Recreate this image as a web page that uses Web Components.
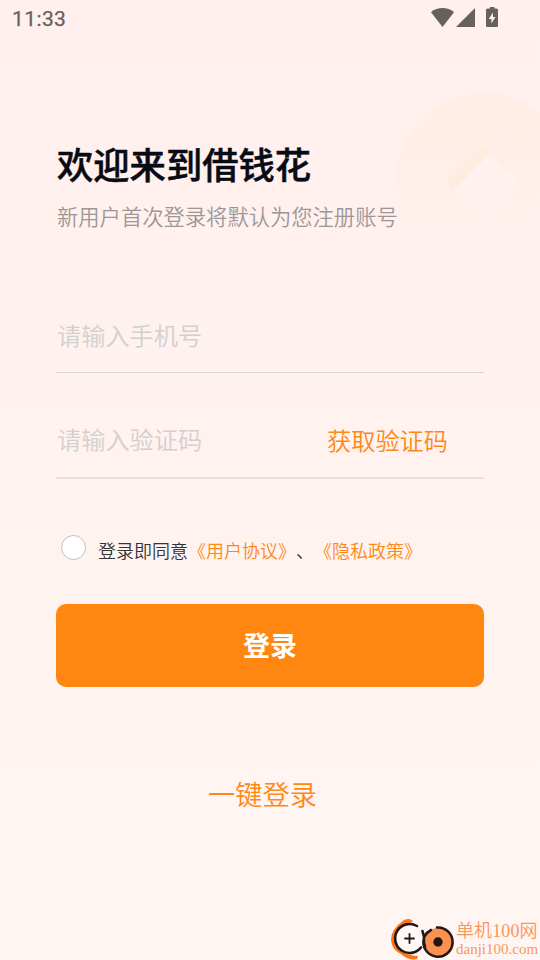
<!DOCTYPE html>
<html lang="zh-CN">
<head>
<meta charset="utf-8">
<title>登录</title>
<style>
html,body{margin:0;padding:0}
body{width:540px;height:960px;overflow:hidden;font-family:"Noto Sans CJK SC",sans-serif;font-weight:350;text-spacing-trim:space-all}
</style>
</head>
<body>
<login-page></login-page>
<script>
function define(name, markup){
  const t=document.createElement('template');
  t.innerHTML=markup;
  customElements.define(name,class extends HTMLElement{
    constructor(){
      super();
      this.attachShadow({mode:'open'}).append(t.content.cloneNode(true));
    }
  });
}

define('status-bar',`
<style>
:host{display:flex;height:38px;box-sizing:border-box;padding:0 40px 2px 12px;align-items:center;color:#66605e;font:400 21px/38px Roboto,sans-serif}
span{flex:1;letter-spacing:.4px;padding-top:2px;-webkit-text-stroke:.25px #66605e}
svg{display:block}
</style>
<span><slot></slot></span>
<svg width="70" height="22" viewBox="430 7 70 22" fill="#66605e">
<path d="M431 12.200C437.500 6.600 447.500 6.600 454 12.200L442.500 27Z"/>
<path d="M456 27L475 8V27Z"/>
<path fill-rule="evenodd" d="M490 7H494.500V8.500H496.500Q498 8.500 498 10V25.500Q498 27 496.500 27H487.500Q486 27 486 25.500V10Q486 8.500 487.500 8.500H490ZM493 12.500L488.700 19H491.400V23.500L495.500 17H493Z"/>
</svg>`);

define('coin-decor',`
<style>:host{display:block;position:absolute;left:390px;top:90px}svg{display:block}</style>
<svg width="150" height="190" viewBox="390 90 150 190">
<defs><linearGradient id="g" x1="0" y1="0" x2="0" y2="1"><stop offset="0" stop-color="#ffede5"/><stop offset=".5" stop-color="#ffefe9"/><stop offset=".52" stop-color="#fff0ec"/><stop offset="1" stop-color="#fff1ee" stop-opacity="0"/></linearGradient></defs>
<circle cx="485" cy="184" r="90.500" fill="url(#g)"/>
<path d="M490 153L517 179Q521 184 517 189L489 216Q484 220 479 216L453 190Z" fill="#fff1ee"/>
<path d="M479 149.500Q485 145.500 491 152L453 191L449 187Q447 182 450 178Z" fill="#ffece1"/>
</svg>`);

define('page-heading',`
<style>
:host{display:block}
h1{margin:0;font-size:36.300px;line-height:50px;font-weight:500;color:#070b14;-webkit-text-stroke:.5px #070b14}
p{margin:13px 0 0;font-size:21.300px;line-height:30px;color:#9b9796}
</style>
<h1><slot></slot></h1><p><slot name="sub"></slot></p>`);

define('form-field',`
<style>
:host{display:flex;box-sizing:border-box;align-items:center;justify-content:space-between;border-bottom:1px solid #d9d5d4;padding:0 36px 0 1px;font-size:24.200px;line-height:34px;color:#d2d0ce}
::slotted([slot=action]){padding-top:2px}
</style>
<slot></slot><slot name="action"></slot>`);

define('agree-row',`
<style>
:host{display:flex;align-items:flex-start;font-size:18px;line-height:26px;color:#333;white-space:nowrap}
svg{display:block;margin:0 12px 0 5px}
p{margin:2px 0 0}
</style>
<svg width="25" height="25"><circle cx="12.500" cy="12.500" r="12" fill="#fff" stroke="#999" stroke-width=".6"/></svg><p><slot></slot></p>`);

define('text-link',`<style>:host{color:#ff8717}</style><slot></slot>`);

define('main-button',`
<style>
:host{display:flex;height:83px;box-sizing:border-box;padding-bottom:2px;border-radius:10px;background:#ff8610;color:#fff;align-items:center;justify-content:center;font-size:27px;font-weight:700;line-height:40px}
</style><slot></slot>`);

define('site-mark',`
<style>
:host{display:flex;position:absolute;left:390px;top:916px;width:150px;height:44px;color:#fa9658}
svg{display:block;flex:none}
div{display:flex;flex-direction:column;font-family:"Liberation Serif","Noto Sans CJK SC",serif;white-space:nowrap;padding-top:4px;margin-left:1px}
b{font-weight:350;font-size:18px;line-height:23px;letter-spacing:.1px}
small{font-weight:400;font-size:15px;line-height:13px}
</style>
<svg width="65" height="44" viewBox="390 916 65 44" fill="none">
<path d="M413 922Q411 917 404 920Q391 929 391 940Q392 950 401 954Q408 961 417 959L418 956Q411 956 406 953Q394 949 395 939Q395 929 405 924Z" fill="#ff7417"/>
<path d="M417 926A14.500 14.500 0 1 0 421 947.500" fill="#fff8f5" stroke="#211818" stroke-width="2.600" stroke-linecap="round"/>
<path d="M405 938.500H414M409.500 934V943" stroke="#211818" stroke-width="1.800" stroke-linecap="round"/>
<circle cx="438" cy="942" r="14" fill="#fc914f"/>
<path d="M422.500 931L424 937Q427 932 431 930M437 927.500A14.600 14.600 0 1 1 424 938Q423.300 942 425 947" stroke="#211818" stroke-width="2.600" stroke-linecap="round" stroke-linejoin="round"/>
<circle cx="438" cy="942" r="4.700" fill="#211818"/>
</svg>
<div><b><slot></slot></b><small><slot name="host"></slot></small></div>`);

define('login-page',`
<style>
:host{display:flex;flex-direction:column;position:relative;width:540px;height:960px;overflow:hidden;background:linear-gradient(#fff0ed,#fff1ee 30%,#fff4f1 70%,#fff6f4)}
main{display:flex;flex-direction:column;position:relative;padding:100px 56px 0}
.phone{height:60px;margin-top:82px;padding-bottom:16px}
.code{height:61px;margin-top:45px;padding-bottom:18px;border-bottom:2px solid #e5dfdd}
agree-row{margin-top:56px}
main-button{margin-top:41px}
.quick{align-self:center;margin:86px 15px 0 0;font-size:27.200px;line-height:40px}
page-heading{padding-left:1px}
</style>
<coin-decor></coin-decor>
<status-bar>11:33</status-bar>
<main>
<page-heading>欢迎来到借钱花<span slot="sub">新用户首次登录将默认为您注册账号</span></page-heading>
<form-field class="phone">请输入手机号</form-field>
<form-field class="code">请输入验证码<text-link slot="action">获取验证码</text-link></form-field>
<agree-row>登录即同意<text-link>《用户协议》</text-link>、<text-link>《隐私政策》</text-link></agree-row>
<main-button>登录</main-button>
<text-link class="quick">一键登录</text-link>
</main>
<site-mark>单机100网<span slot="host">danji100.com</span></site-mark>`);
</script>
</body>
</html>
